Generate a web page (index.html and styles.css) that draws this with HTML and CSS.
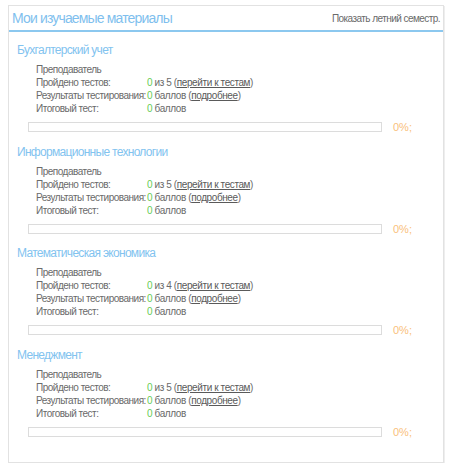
FILE: index.html
```html
<!DOCTYPE html>
<html lang="ru">
<head>
<meta charset="utf-8">
<title>Мои изучаемые материалы</title>
<link rel="stylesheet" href="styles.css">
</head>
<body>
<div class="panel">
  <div class="panel-head">
    <h1 class="panel-title">Мои изучаемые материалы</h1>
    <a class="season-link" href="#">Показать летний семестр.</a>
  </div>
  <div class="panel-body">
    <div class="course">
      <h2 class="course-title">Бухгалтерский учет</h2>
      <div class="info">
        <div class="label">Преподаватель</div><div class="value"></div>
        <div class="label">Пройдено тестов:</div><div class="value"><span class="num">0</span> из 5 (<a href="#">перейти к тестам</a>)</div>
        <div class="label">Результаты тестирования:</div><div class="value"><span class="num">0</span> баллов (<a href="#">подробнее</a>)</div>
        <div class="label">Итоговый тест:</div><div class="value"><span class="num">0</span> баллов</div>
      </div>
      <div class="progress"><div class="bar"></div><span class="pct">0%;</span></div>
    </div>
    <div class="course">
      <h2 class="course-title">Информационные технологии</h2>
      <div class="info">
        <div class="label">Преподаватель</div><div class="value"></div>
        <div class="label">Пройдено тестов:</div><div class="value"><span class="num">0</span> из 5 (<a href="#">перейти к тестам</a>)</div>
        <div class="label">Результаты тестирования:</div><div class="value"><span class="num">0</span> баллов (<a href="#">подробнее</a>)</div>
        <div class="label">Итоговый тест:</div><div class="value"><span class="num">0</span> баллов</div>
      </div>
      <div class="progress"><div class="bar"></div><span class="pct">0%;</span></div>
    </div>
    <div class="course">
      <h2 class="course-title">Математическая экономика</h2>
      <div class="info">
        <div class="label">Преподаватель</div><div class="value"></div>
        <div class="label">Пройдено тестов:</div><div class="value"><span class="num">0</span> из 4 (<a href="#">перейти к тестам</a>)</div>
        <div class="label">Результаты тестирования:</div><div class="value"><span class="num">0</span> баллов (<a href="#">подробнее</a>)</div>
        <div class="label">Итоговый тест:</div><div class="value"><span class="num">0</span> баллов</div>
      </div>
      <div class="progress"><div class="bar"></div><span class="pct">0%;</span></div>
    </div>
    <div class="course">
      <h2 class="course-title">Менеджмент</h2>
      <div class="info">
        <div class="label">Преподаватель</div><div class="value"></div>
        <div class="label">Пройдено тестов:</div><div class="value"><span class="num">0</span> из 5 (<a href="#">перейти к тестам</a>)</div>
        <div class="label">Результаты тестирования:</div><div class="value"><span class="num">0</span> баллов (<a href="#">подробнее</a>)</div>
        <div class="label">Итоговый тест:</div><div class="value"><span class="num">0</span> баллов</div>
      </div>
      <div class="progress"><div class="bar"></div><span class="pct">0%;</span></div>
    </div>
  </div>
</div>
</body>
</html>
```
FILE: styles.css
```css
html, body {
  margin: 0;
  padding: 0;
  background: #fff;
}
body {
  font-family: "Liberation Sans", Arial, sans-serif;
  font-size: 10px;
  letter-spacing: -0.4px;
  color: #6a6a6a;
}
.panel {
  box-sizing: border-box;
  width: 436px;
  height: 458px;
  margin: 5px 0 0 8px;
  border: 1px solid #e2e2e2;
  box-shadow: 1px 1px 0 #eeeeee;
}
.panel-head {
  display: flex;
  justify-content: space-between;
  align-items: center;
  height: 24px;
  border-bottom: 2px solid #8cc8ef;
  padding: 0 3px 0 3px;
}
.panel-title {
  margin: 0;
  font-size: 14px;
  letter-spacing: -0.85px;
  font-weight: normal;
  color: #7fbfee;
}
.season-link {
  color: #6a6a6a;
  text-decoration: none;
  font-size: 10px;
  letter-spacing: -0.55px;
}
.panel-body {
  padding: 10px 0 0 8px;
  display: flex;
  flex-direction: column;
  gap: 11.6px;
}
.course {
  display: flex;
  flex-direction: column;
}
.course-title {
  margin: 0;
  font-size: 12px;
  letter-spacing: -0.7px;
  line-height: 16px;
  font-weight: normal;
  color: #82c3ef;
}
.info {
  display: grid;
  grid-template-columns: 111px auto;
  margin: 5px 0 0 19px;
  line-height: 13px;
  white-space: nowrap;
}
.label, .value {
  min-height: 13px;
}
.label {
  letter-spacing: -0.5px;
}
.value a {
  color: #5a5a5a;
  text-decoration: underline;
}
.num {
  color: #66cc55;
}
.progress {
  display: flex;
  align-items: center;
  gap: 11px;
  margin: 7px 0 0 11px;
}
.bar {
  box-sizing: border-box;
  width: 354px;
  height: 10px;
  border: 1px solid #dcdcdc;
}
.pct {
  color: #f9c17c;
  font-size: 11px;
  letter-spacing: 0;
  line-height: 10px;
}
```
